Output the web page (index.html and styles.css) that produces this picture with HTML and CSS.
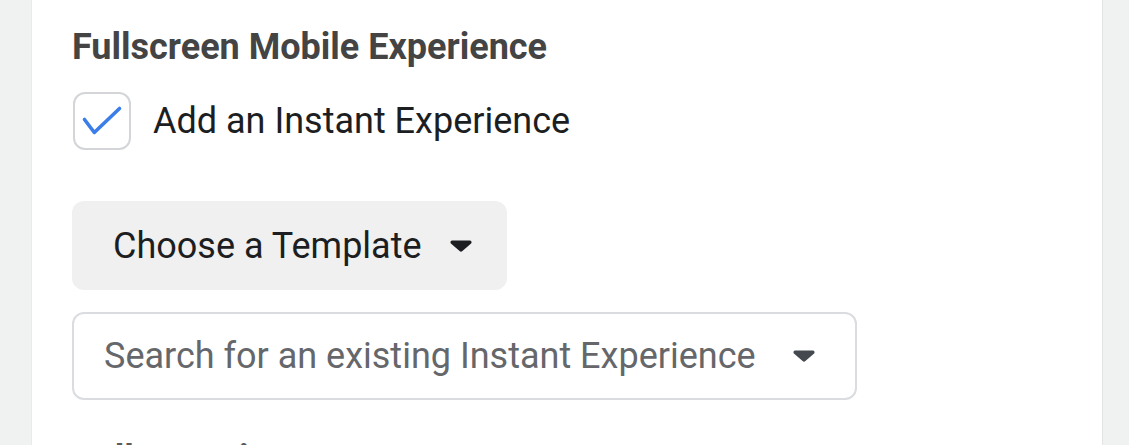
FILE: index.html
```html
<!DOCTYPE html>
<html lang="en">
<head>
<meta charset="utf-8">
<title>Fullscreen Mobile Experience</title>
<link rel="stylesheet" href="styles.css">
</head>
<body>
<div class="page">
  <section class="card">
    <h2 class="heading">Fullscreen Mobile Experience</h2>
    <label class="check-row">
      <span class="checkbox">
        <svg width="54" height="54" viewBox="0 0 54 54" aria-hidden="true">
          <polyline points="9.5,25.5 19.3,38.5 44.5,14.5" fill="none" stroke="#3b7de9" stroke-width="3.6" stroke-linecap="round" stroke-linejoin="round"/>
        </svg>
      </span>
      <span class="check-label">Add an Instant Experience</span>
    </label>
    <button class="template-btn" type="button">
      <span>Choose a Template</span>
      <svg class="caret" width="22" height="12" viewBox="0 0 22 12" aria-hidden="true">
        <path d="M2.2 0.5 H19.8 a1.8 1.8 0 0 1 1.3 3 L12.4 11 a2 2 0 0 1 -2.8 0 L0.9 3.5 A1.8 1.8 0 0 1 2.2 0.5 Z" fill="#1c1e21"/>
      </svg>
    </button>
    <div class="search-select">
      <span class="placeholder">Search for an existing Instant Experience</span>
      <svg class="caret" width="22" height="12" viewBox="0 0 22 12" aria-hidden="true">
        <path d="M2.2 0.5 H19.8 a1.8 1.8 0 0 1 1.3 3 L12.4 11 a2 2 0 0 1 -2.8 0 L0.9 3.5 A1.8 1.8 0 0 1 2.2 0.5 Z" fill="#444950"/>
      </svg>
    </div>
    <h2 class="heading next">Call to Action</h2>
  </section>
</div>
</body>
</html>
```

FILE: styles.css
```css
html, body {
  margin: 0;
  padding: 0;
}

body {
  background: #f0f2f2;
  font-family: Roboto, "Liberation Sans", Arial, sans-serif;
  height: 445px;
  overflow: hidden;
}

.page {
  display: flex;
  padding: 0 27px 0 32px;
  height: 445px;
}

.card {
  flex: 1;
  background: #ffffff;
  box-shadow: 1px 0 0 #e2e4e4, -1px 0 0 #e9ebeb;
  padding: 26px 0 0 40px;
  display: flex;
  flex-direction: column;
  align-items: flex-start;
  overflow: hidden;
}

.card > * {
  flex-shrink: 0;
}

.heading {
  margin: 0;
  font-size: 36px;
  line-height: 42px;
  font-weight: 700;
  color: #444444;
}

.heading.next {
  margin-top: 38px;
  color: #5a5a5a;
}

.check-row {
  margin-top: 24px;
  margin-left: 1px;
  display: flex;
  align-items: center;
  gap: 22px;
}

.checkbox {
  width: 58px;
  height: 58px;
  box-sizing: border-box;
  border: 2px solid #d3d5d8;
  border-radius: 12px;
  background: #ffffff;
  display: block;
}

.checkbox svg {
  display: block;
}

.check-label {
  font-size: 36px;
  line-height: 42px;
  color: #1c1e21;
}

.template-btn {
  margin-top: 51px;
  display: inline-flex;
  align-items: center;
  gap: 28px;
  height: 89px;
  padding: 0 35px 0 41px;
  border: none;
  border-radius: 12px;
  background: #f0f0f0;
  font-family: inherit;
  font-size: 36px;
  line-height: 42px;
  color: #1c1e21;
}

.caret {
  display: block;
  flex: none;
}

.search-select {
  margin-top: 22px;
  width: 785px;
  height: 88px;
  box-sizing: border-box;
  border: 2px solid #dadce0;
  border-radius: 12px;
  padding: 0 40px 0 30px;
  display: flex;
  align-items: center;
  justify-content: space-between;
}

.placeholder {
  font-size: 36px;
  line-height: 42px;
  color: #65676b;
}
```
